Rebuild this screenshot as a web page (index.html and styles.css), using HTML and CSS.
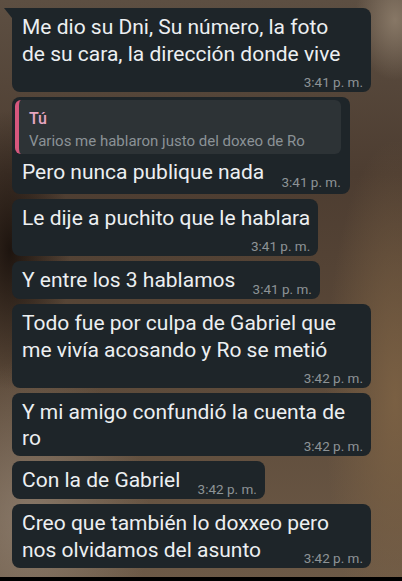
FILE: index.html
```html
<!DOCTYPE html>
<html lang="es">
<head>
    <meta charset="UTF-8">
    <meta name="viewport" content="width=device-width, initial-scale=1.0">
    <title>Chat</title>
    <link rel="stylesheet" href="styles.css">
</head>
<body>
    <div class="chat">
        <div class="bubble wide first">
            <div class="text">Me dio su Dni, Su número, la foto<br>de su cara, la dirección donde vive</div>
            <div class="time">3:41 p. m.</div>
        </div>

        <div class="bubble reply">
            <div class="quote">
                <div class="quote-name">Tú</div>
                <div class="quote-text">Varios me hablaron justo del doxeo de Ro</div>
            </div>
            <div class="text">Pero nunca publique nada <span class="time inline">3:41 p. m.</span></div>
        </div>

        <div class="bubble">
            <div class="text">Le dije a puchito que le hablara</div>
            <div class="time">3:41 p. m.</div>
        </div>

        <div class="bubble">
            <div class="text">Y entre los 3 hablamos <span class="time inline">3:41 p. m.</span></div>
        </div>

        <div class="bubble wide">
            <div class="text">Todo fue por culpa de Gabriel que<br>me vivía acosando y Ro se metió</div>
            <div class="time">3:42 p. m.</div>
        </div>

        <div class="bubble wide">
            <div class="text">Y mi amigo confundió la cuenta de<br>ro <span class="time inline push">3:42 p. m.</span></div>
        </div>

        <div class="bubble">
            <div class="text">Con la de Gabriel <span class="time inline">3:42 p. m.</span></div>
        </div>

        <div class="bubble wide">
            <div class="text">Creo que también lo doxxeo pero<br>nos olvidamos del asunto <span class="time inline push">3:42 p. m.</span></div>
        </div>
    </div>
    <div class="navbar"></div>
</body>
</html>
```

FILE: styles.css
```css
html, body {
    margin: 0;
    height: 100%;
}

body {
    width: 402px;
    height: 581px;
    overflow: hidden;
    display: flex;
    flex-direction: column;
    font-family: Roboto, "Noto Sans", sans-serif;
    color: #eceff1;
    /* blurry photo behind the chat */
    background:
        radial-gradient(ellipse 60px 140px at 10px 250px, rgba(20, 12, 8, 0.85), rgba(20, 12, 8, 0)),
        radial-gradient(ellipse 120px 160px at 30px 520px, rgba(150, 135, 120, 0.7), rgba(150, 135, 120, 0)),
        radial-gradient(ellipse 70px 260px at 395px 400px, rgba(125, 98, 68, 0.9), rgba(125, 98, 68, 0)),
        radial-gradient(ellipse 40px 60px at 395px 20px, rgba(140, 124, 106, 0.9), rgba(140, 124, 106, 0)),
        linear-gradient(180deg, #5d4f42 0%, #4d3d31 30%, #5a4838 60%, #6d5a47 100%);
}

.chat {
    flex: 1;
    display: flex;
    flex-direction: column;
    align-items: flex-start;
    gap: 5px;
    padding: 8px 0 0 12px;
}

.navbar {
    height: 4px;
    background: #000;
}

.bubble {
    position: relative;
    background-color: #1e2529;
    border-radius: 8px;
    padding: 6px 8px 1px 10px;
    box-sizing: border-box;
}

.bubble.wide {
    width: 359px;
}

.bubble.first {
    border-top-left-radius: 0;
}

.bubble.first::before {
    content: "";
    position: absolute;
    left: -8px;
    top: 0;
    width: 8px;
    height: 10px;
    background-color: #1e2529;
    clip-path: polygon(0 0, 100% 0, 100% 100%);
}

.text {
    font-size: 21px;
    line-height: 26.5px;
    white-space: nowrap;
}

.time {
    font-size: 13.5px;
    line-height: 17px;
    color: #8d9396;
    text-align: right;
    margin-top: 6.5px;
}

.time.inline {
    display: inline-block;
    margin: 0 0 0 12px;
    vertical-align: -7px;
}

.time.push {
    float: right;
    margin-top: 13px;
}

.reply {
    padding: 3px 9px 3px 3px;
}

.reply .time.inline {
    vertical-align: -8px;
}

.quote {
    background-color: #2d3336;
    border-left: 4px solid #d6577d;
    border-radius: 6px;
    padding: 7px 8px 3px 10px;
    margin-bottom: 5.5px;
}

.quote-name {
    color: #e6a6c0;
    font-size: 16px;
    font-weight: 500;
    line-height: 24px;
}

.quote-text {
    color: #8b9296;
    font-size: 15px;
    line-height: 20px;
}

.reply .text {
    padding-left: 7px;
}
```
